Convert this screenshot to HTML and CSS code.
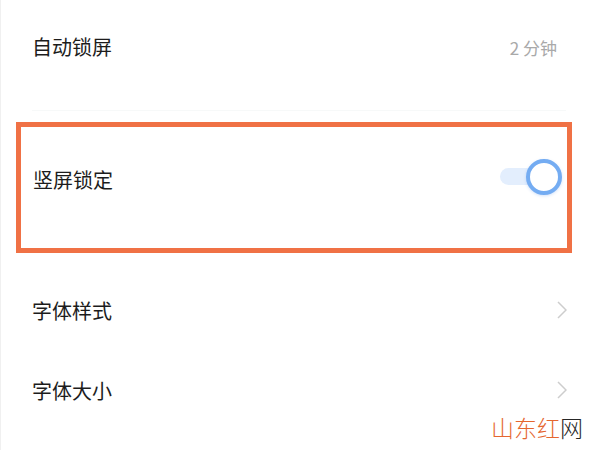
FILE: index.html
```html
<!DOCTYPE html>
<html lang="zh-CN">
<head>
  <meta charset="UTF-8">
  <meta name="viewport" content="width=device-width, initial-scale=1.0">
  <title>显示设置</title>
  <link rel="stylesheet" href="styles.css">
</head>
<body>
<div class="screen">
  <div class="row row-top">
    <span class="label">自动锁屏</span>
    <span class="value">2 分钟</span>
  </div>
  <div class="divider"></div>

  <div class="highlight">
    <div class="row row-lock">
      <span class="label">竖屏锁定</span>
      <div class="toggle">
        <span class="track"></span>
        <span class="knob"></span>
      </div>
    </div>
  </div>

  <div class="row row-link first">
    <span class="label">字体样式</span>
    <svg class="chevron" width="10" height="18" viewBox="0 0 10 18"><polyline points="1,1 9,9 1,17" fill="none" stroke="#cdcdcd" stroke-width="1.5"/></svg>
  </div>
  <div class="row row-link">
    <span class="label">字体大小</span>
    <svg class="chevron" width="10" height="18" viewBox="0 0 10 18"><polyline points="1,1 9,9 1,17" fill="none" stroke="#cdcdcd" stroke-width="1.5"/></svg>
  </div>

  <div class="watermark"><span class="wm-red">山东红</span><span class="wm-dark">网</span></div>
</div>
</body>
</html>
```

FILE: styles.css
```css
body { margin: 0; background: #fff; font-family: "Noto Sans CJK SC", "Noto Sans", sans-serif; }
.screen { position: relative; width: 600px; height: 450px; overflow: hidden; border-left: 1px solid #f0f0f0; box-sizing: border-box; }

.row { display: flex; align-items: center; justify-content: space-between; }
.label { font-size: 20px; color: #1c1c1c; line-height: 1; }

.row-top { height: 94px; padding: 0 43px 0 31px; }
.value { font-size: 17px; color: #a9a9a9; line-height: 1; }
.divider { height: 1px; background: #f7f9f9; margin: 16px 34px 0 31px; }

.highlight { margin: 11px 0 0 15px; width: 556px; height: 131px; box-sizing: border-box; border: 5px solid #f07145; }
.row-lock { height: 106px; padding: 0 5px 0 12px; }

.toggle { position: relative; width: 62px; height: 36px; margin-bottom: 6px; }
.track { position: absolute; left: 0; top: 9px; width: 50px; height: 17px; border-radius: 9px; background: #e3eefd; }
.knob { position: absolute; right: 0; top: 0; width: 36px; height: 36px; box-sizing: border-box; border-radius: 50%; border: 4px solid #74acf2; background: #fff; box-shadow: 0 1px 3px rgba(80, 140, 230, 0.25); }

.row-link { height: 80px; padding: 0 33px 0 31px; }
.row-link.first { margin-top: 18px; }
.chevron { display: block; margin-top: -3px; }

.watermark { position: absolute; right: 17px; top: 416px; font-size: 23px; line-height: 1; font-weight: 300; }
.wm-red { color: #e5662f; }
.wm-dark { color: #262626; }
```
